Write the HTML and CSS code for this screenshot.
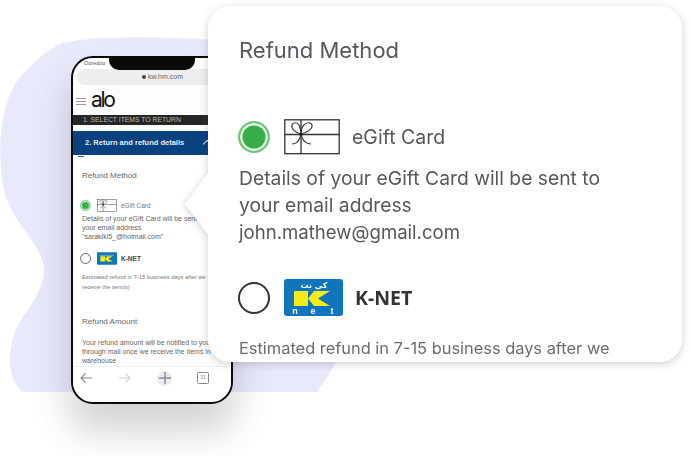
FILE: index.html
```html
<!DOCTYPE html>
<html>
	<head>
		<title>Refund Method</title>
		<meta charset="UTF-8">
		<link rel="stylesheet" href="styles.css">
	</head>
	<body>
		<svg width="0" height="0" class="defs">
			<symbol id="gift" viewBox="0 0 56 36">
				<rect x="0.8" y="0.8" width="54.4" height="33.9" fill="#fff" stroke="#333" stroke-width="1.3"/>
				<path d="M0.8 15.500H55M17 0.8V34.700" fill="none" stroke="#333" stroke-width="1.3"/>
				<path d="M17 15C12 14 7 10 8 6C9 3 13 3 15 6C16 8 17 11 17 15C17 11 18 8 20 6C22 3 27 3 28 6C29 10 22 14 17 15ZM17 15C16 20 13 25 8 25M17 15C18 20 21 25 27 25" fill="none" stroke="#333" stroke-width="1.200"/>
				<circle cx="17" cy="15.500" r="1.500" fill="#222"/>
			</symbol>
		</svg>

		<div class="stage">
			<svg class="blob" width="345" height="362" viewBox="0 30 345 362">
				<path d="M63 43C90 36 160 36 215 40L345 340C338 360 328 378 317 392H22C10 380 6 360 14 335C22 312 44 295 44 270C44 245 12 225 4 190C-4 150 0 92 27 70C38 58 50 48 63 43Z" fill="#e8eafb"/>
			</svg>

			<div class="phone">
				<div class="notch"></div>
				<div class="carrier">Ooredoo</div>
				<div class="urlbar"><span class="lock"></span>kw.hm.com</div>
				<div class="logo-row">
					<div class="burger"><i></i><i></i><i></i></div>
					<div class="logo">alo</div>
				</div>
				<div class="steps">1. SELECT ITEMS TO RETURN</div>
				<div class="band">2. Return and refund details<span class="chev"></span></div>
				<div class="dash"></div>
				<div class="phone-body">
					<div class="p-head">Refund Method</div>
					<div class="p-opt p-opt-gift">
						<span class="p-radio on"></span>
						<svg class="p-icon" width="20" height="13"><use href="#gift"/></svg>
						<span class="p-label">eGift Card</span>
					</div>
					<div class="p-text">
						<div>Details of your eGift Card will be sent to</div>
						<div>your email address</div>
						<div>"sarakiki5_@hotmail.com"</div>
					</div>
					<div class="p-opt p-opt-knet">
						<span class="p-radio"></span>
						<svg class="p-icon" width="20" height="13" viewBox="0 0 59 37">
							<rect width="59" height="37" rx="3" fill="#0f75bc"/>
							<rect x="8" y="8" width="42" height="1" fill="#fff"/>
							<path d="M10 12H24V27H10ZM24 19.500L30 12H46L34 19.500L46 27H30Z" fill="#f3ec19"/>
						</svg>
						<span class="p-label bold">K-NET</span>
					</div>
					<div class="p-small">
						<div>Estimated refund in 7-15 business days after we</div>
						<div>receive the item(s)</div>
					</div>
					<div class="p-head p-head-amount">Refund Amount</div>
					<div class="p-text">
						<div>Your refund amount will be notified to you</div>
						<div>through mail once we receive the items in</div>
						<div>warehouse</div>
					</div>
				</div>
				<div class="toolbar">
					<svg width="14" height="12" viewBox="0 0 14 12"><path d="M13 6H2M6.500 1.500L2 6L6.500 10.500" fill="none" stroke="#8a8a8a" stroke-width="1.100"/></svg>
					<svg width="14" height="12" viewBox="0 0 14 12"><path d="M1 6H12M7.500 1.500L12 6L7.500 10.500" fill="none" stroke="#d2d2d2" stroke-width="1.100"/></svg>
					<span class="plus"><svg width="14" height="14" viewBox="0 0 14 14"><path d="M7 1V13M1 7H13" fill="none" stroke="#8a8f99" stroke-width="1.500"/></svg></span>
					<span class="tabs">31</span>
				</div>
			</div>

			<div class="card">
				<div class="card-inner">
					<h2 class="title">Refund Method</h2>
					<div class="opt opt-gift">
						<span class="radio on"></span>
						<svg class="opt-icon" width="56" height="36"><use href="#gift"/></svg>
						<span class="opt-label">eGift Card</span>
					</div>
					<p class="text">Details of your eGift Card will be sent to<br>your email address<br><span class="mail">john.mathew@gmail.com</span></p>
					<div class="opt opt-knet">
						<span class="radio"></span>
						<svg class="opt-icon" width="59" height="37" viewBox="0 0 59 37">
							<rect width="59" height="37" rx="3" fill="#0f75bc"/>
							<text x="30" y="9" class="knet-ar">كي نت</text>
							<path d="M10 12H24V27H10ZM24 19.500L30 12H46L34 19.500L46 27H30Z" fill="#f3ec19"/>
							<text x="11" y="35" class="knet-en">n</text>
							<text x="29" y="35" class="knet-en">e</text>
							<text x="48" y="35" class="knet-en">t</text>
						</svg>
						<span class="opt-label bold">K-NET</span>
					</div>
					<p class="text small">Estimated refund in 7-15 business days after we</p>
				</div>
			</div>
		</div>
	</body>
</html>
```

FILE: styles.css
```css
html, body {
	margin: 0;
	padding: 0;
	background: #fff;
}

.defs {
	display: block;
	position: absolute;
}

.stage {
	position: relative;
	width: 690px;
	height: 456px;
	overflow: hidden;
	font-family: Inter, "Liberation Sans", sans-serif;
	color: #55585c;
}

.blob {
	position: absolute;
	left: 0;
	top: 30px;
}

.knet-ar {
	font: bold 8px "DejaVu Sans", sans-serif;
	fill: #fff;
	text-anchor: middle;
}

.knet-en {
	font: bold 9px "Liberation Sans", sans-serif;
	fill: #fff;
	text-anchor: middle;
}

/* phone */
.phone {
	position: absolute;
	left: 71px;
	top: 56px;
	width: 158px;
	height: 344px;
	border: 2px solid #0a0a0a;
	border-radius: 22px;
	background: #fff;
	overflow: hidden;
	box-shadow: 0 26px 36px 2px rgba(60, 60, 70, 0.22);
	font-family: "Liberation Sans", sans-serif;
}

.notch {
	position: absolute;
	left: 36px;
	top: 0;
	width: 86px;
	height: 12px;
	background: #0a0a0a;
	border-radius: 0 0 10px 10px;
}

.carrier {
	height: 11px;
	padding: 2px 0 0 11px;
	box-sizing: border-box;
	font-size: 5.500px;
	line-height: 7px;
	color: #555;
}

.urlbar {
	margin: 0 0 0 4px;
	width: 170px;
	height: 16px;
	padding-left: 65px;
	box-sizing: border-box;
	background: #eeeeef;
	border-radius: 7px;
	font-size: 7px;
	line-height: 16px;
	color: #666;
	white-space: nowrap;
}

.lock {
	display: inline-block;
	width: 4px;
	height: 4px;
	margin-right: 2px;
	background: #444;
	border-radius: 2px;
}

.logo-row {
	display: flex;
	align-items: center;
	height: 30px;
	padding-left: 3px;
	background: #fdfdfd;
}

.burger {
	display: flex;
	flex-direction: column;
	gap: 2px;
	width: 10px;
	margin-top: 3px;
}

.burger i {
	display: block;
	height: 1px;
	background: #999;
}

.logo {
	margin-left: 5px;
	font: 400 21px/22px Inter, sans-serif;
	letter-spacing: -2.300px;
	color: #111;
}

.steps {
	height: 10px;
	padding-left: 10px;
	background: #262626;
	color: #bbb;
	font-size: 6.800px;
	line-height: 10px;
	white-space: nowrap;
}

.band {
	position: relative;
	height: 24px;
	margin-top: 6px;
	padding-left: 12px;
	background: #0a427f;
	color: #e6edf5;
	font-size: 7.500px;
	font-weight: bold;
	line-height: 24px;
	white-space: nowrap;
}

.chev {
	position: absolute;
	left: 131px;
	top: 10px;
	width: 5px;
	height: 5px;
	border-top: 1px solid #cdd;
	border-right: 1px solid #cdd;
	transform: rotate(-45deg);
}

.dash {
	width: 6px;
	height: 1px;
	margin: 1px 0 0 5px;
	background: #555;
}

.phone-body {
	padding: 14px 0 0 9px;
	height: 209px;
	box-sizing: border-box;
	overflow: hidden;
	white-space: nowrap;
}

.p-head {
	font-size: 8px;
	line-height: 10px;
	color: #666;
}

.p-head-amount {
	margin-top: 25px;
}

.p-opt {
	display: flex;
	align-items: center;
	height: 14px;
}

.p-opt-gift {
	margin-top: 17px;
}

.p-opt-knet {
	margin-top: 10px;
}

.p-radio {
	width: 11px;
	height: 11px;
	margin-left: -2px;
	border: 1px solid #666;
	border-radius: 50%;
	box-sizing: border-box;
	background: #fff;
}

.p-radio.on {
	border: 1px solid #8fd39a;
	background: #3fae4d;
	box-shadow: inset 0 0 0 1px #d8f1dc;
}

.p-icon {
	margin-left: 6px;
	flex: none;
}

.p-label {
	margin-left: 4px;
	font-size: 6.500px;
	color: #777;
}

.p-label.bold {
	font-weight: bold;
	color: #444;
}

.p-text {
	margin-top: 2px;
	font-size: 7px;
	line-height: 9.200px;
	color: #666;
}

.p-head-amount + .p-text {
	margin-top: 11px;
}

.p-small {
	margin-top: 6px;
	font-size: 5.800px;
	line-height: 10px;
	color: #777;
}

.toolbar {
	display: flex;
	align-items: center;
	justify-content: space-between;
	height: 22px;
	padding: 0 22px 0 6px;
	border-top: 1px solid #eee;
	background: #fff;
}

.plus {
	display: flex;
	align-items: center;
	justify-content: center;
	width: 15px;
	height: 15px;
	background: #e9ebf0;
	border-radius: 50%;
}

.tabs {
	width: 10px;
	height: 10px;
	border: 1px solid #8a8a8a;
	border-radius: 1.500px;
	font-size: 4.500px;
	line-height: 10px;
	text-align: center;
	color: #777;
}

/* big card */
.card {
	position: absolute;
	left: 208px;
	top: 6px;
	width: 474px;
	height: 356px;
	background: #fff;
	border-radius: 22px;
	filter: drop-shadow(0 2px 4px rgba(60, 60, 70, 0.24));
}

.card::before {
	content: "";
	position: absolute;
	left: -23px;
	top: 166px;
	width: 24px;
	height: 64px;
	background: #fff;
	clip-path: polygon(0 50%, 100% 0, 100% 100%);
}

.card-inner {
	position: relative;
	height: 100%;
	padding: 31px 0 0 31px;
	box-sizing: border-box;
	overflow: hidden;
	white-space: nowrap;
}

.title {
	margin: 0;
	font-size: 22px;
	font-weight: 400;
	line-height: 26px;
	color: #55585c;
}

.opt {
	display: flex;
	align-items: center;
}

.opt-gift {
	margin-top: 56px;
}

.opt-knet {
	margin-top: 33px;
}

.radio {
	width: 32px;
	height: 32px;
	margin-left: -1px;
	box-sizing: border-box;
	border: 2px solid #333;
	border-radius: 50%;
	background: #fff;
}

.radio.on {
	border: 2px solid #6fc67c;
	background: #37ad47;
	box-shadow: inset 0 0 0 2.500px #e4f6e7;
}

.opt-icon {
	margin-left: 14px;
	flex: none;
}

.opt-label {
	margin-left: 12px;
	font-size: 19.500px;
	color: #55585c;
}

.opt-label.bold {
	margin-left: 12px;
	font-family: "Open Sans", sans-serif;
	font-size: 19.500px;
	font-weight: bold;
	color: #333;
}

.text {
	margin: 10px 0 0 0;
	font-size: 19.300px;
	line-height: 27px;
	color: #55585c;
}

.mail {
	font-size: 18.600px;
}

.text.small {
	margin-top: 20px;
	font-size: 16.400px;
	line-height: 24px;
	color: #6a6d70;
}
```
